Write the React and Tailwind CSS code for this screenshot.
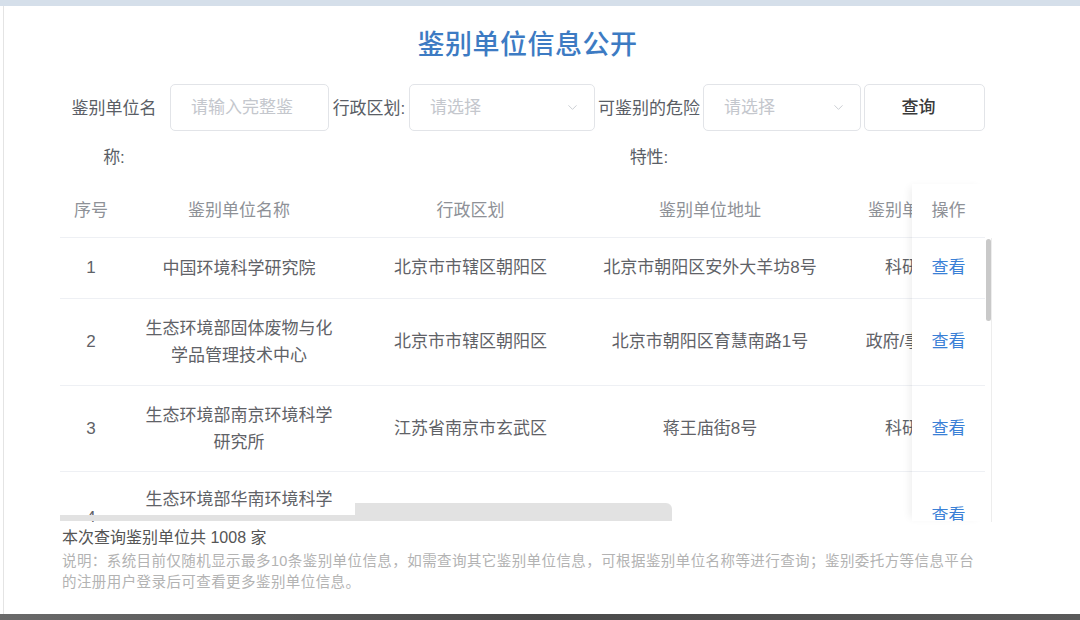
import { ChevronDown } from "lucide-react";

const rows = [
  { no: "1", name: ["中国环境科学研究院"], area: "北京市市辖区朝阳区", addr: "北京市朝阳区安外大羊坊8号", type: "科研院所" },
  { no: "2", name: ["生态环境部固体废物与化", "学品管理技术中心"], area: "北京市市辖区朝阳区", addr: "北京市朝阳区育慧南路1号", type: "政府/事业单位" },
  { no: "3", name: ["生态环境部南京环境科学", "研究所"], area: "江苏省南京市玄武区", addr: "蒋王庙街8号", type: "科研院所" },
];

const rowHeights = ["h-[61px]", "h-[87px]", "h-[86px]"];

function Label({ lines, w }) {
  return (
    <div className={`${w} shrink-0 text-center leading-[49px] text-[17px] text-[#5a5e66]`}>
      {lines.map((l) => (
        <div key={l}>{l}</div>
      ))}
    </div>
  );
}

function Select({ w, pad }) {
  return (
    <div className={`${w} h-[47px] shrink-0 flex items-center justify-between rounded-[5px] border border-[#e2e4e8] pl-[20px] ${pad} text-[17px] text-[#c4c7cd]`}>
      <span>请选择</span>
      <ChevronDown size={15} strokeWidth={1.4} className="text-[#c4c7cd]" />
    </div>
  );
}

export default function App() {
  return (
    <div className="w-[1080px] h-[620px] overflow-hidden bg-white flex flex-col font-['Liberation_Sans','Noto_Sans_CJK_SC',sans-serif]">
      <div className="h-[6px] bg-[#d5dfea] shrink-0" />
      <div className="flex-1 ml-[3px] border-l border-[#e4e4e4] flex flex-col">
        <h1 className="mt-[21px] w-[1047px] text-center text-[27px] leading-[36px] font-medium text-[#3d7bc3] tracking-[0.5px]">
          鉴别单位信息公开
        </h1>

        <div className="mt-[21px] flex items-start pl-[58px]">
          <Label lines={["鉴别单位名", "称:"]} w="w-[104px]" />
          <div className="ml-[4px] w-[159px] h-[47px] shrink-0 flex items-center rounded-[5px] border border-[#e2e4e8] pl-[20px] text-[17px] text-[#c4c7cd]">
            请输入完整鉴
          </div>
          <Label lines={["行政区划:"]} w="w-[80px]" />
          <Select w="w-[186px]" pad="pr-[14px]" />
          <Label lines={["可鉴别的危险", "特性:"]} w="w-[108px]" />
          <Select w="w-[158px]" pad="pr-[14px]" />
          <button className="ml-[3px] w-[121px] h-[47px] shrink-0 rounded-[5px] border border-[#e2e4e8] pr-[12px] text-[17px] font-medium text-[#3a3a3a]">
            查询
          </button>
        </div>

        <div className="relative mt-[2px] ml-[56px] w-[932px]">
          <div className="w-[925px] h-[54px] overflow-hidden border-b border-[#eef0f4] flex items-center text-[17px] text-[#8e9197] whitespace-nowrap">
            <div className="w-[62px] shrink-0 text-center">序号</div>
            <div className="w-[234px] shrink-0 text-center">鉴别单位名称</div>
            <div className="w-[229px] shrink-0 text-center">行政区划</div>
            <div className="w-[250px] shrink-0 text-center">鉴别单位地址</div>
            <div className="w-[168px] shrink-0 text-center">鉴别单位类型</div>
          </div>

          <div className="relative w-[925px] h-[284px] overflow-hidden text-[17px] text-[#5f6267]">
            {rows.map((r, i) => (
              <div key={r.no} className={`${rowHeights[i]} flex items-center border-b border-[#eef0f4] whitespace-nowrap`}>
                <div className="w-[62px] shrink-0 text-center">{r.no}</div>
                <div className="w-[234px] shrink-0 text-center leading-[27px]">
                  {r.name.map((l) => (
                    <div key={l}>{l}</div>
                  ))}
                </div>
                <div className="w-[229px] shrink-0 text-center">{r.area}</div>
                <div className="w-[250px] shrink-0 text-center">{r.addr}</div>
                <div className="w-[168px] shrink-0 text-center">{r.type}</div>
              </div>
            ))}
            <div className="h-[86px] flex items-start whitespace-nowrap leading-[27px]">
              <div className="w-[62px] shrink-0 pt-[32px] text-center">4</div>
              <div className="w-[234px] shrink-0 pt-[14px] text-center">生态环境部华南环境科学</div>
            </div>
            <div className="absolute left-0 bottom-[1px] w-[295px] h-[6px] bg-[#e2e2e2]" />
            <div className="absolute left-[295px] bottom-[1px] w-[317px] h-[18px] bg-[#e2e2e2] rounded-tr-[6px]" />
          </div>

          <div className="absolute top-0 right-[7px] w-[73px] h-[337px] bg-white overflow-hidden shadow-[-5px_0_8px_-3px_rgba(0,0,0,0.07)] text-[17px]">
            <div className="h-[54px] flex items-center justify-center border-b border-[#eef0f4] text-[#8e9197]">操作</div>
            {rows.map((r, i) => (
              <div key={r.no} className={`${rowHeights[i]} flex items-center justify-center border-b border-[#eef0f4] text-[#3a80d6]`}>
                查看
              </div>
            ))}
            <div className="h-[86px] pt-[30px] leading-[27px] text-center text-[#3a80d6]">查看</div>
          </div>

          <div className="absolute top-[54px] right-0 w-[7px] h-[284px] border-r border-[#ededed]">
            <div className="mt-[1px] ml-[1px] w-[5px] h-[82px] rounded-full bg-[#c9c9c9]" />
          </div>
        </div>

        <div className="mt-[4px] ml-[58px] text-[16px] leading-[24px] text-[#555]">本次查询鉴别单位共 1008 家</div>
        <div className="mt-[1px] ml-[58px] w-[925px] text-[14.5px] leading-[21px] text-[#b3b3b3] tracking-[0.42px]">
          说明：系统目前仅随机显示最多10条鉴别单位信息，如需查询其它鉴别单位信息，可根据鉴别单位名称等进行查询；鉴别委托方等信息平台的注册用户登录后可查看更多鉴别单位信息。
        </div>
      </div>
      <div className="h-[6px] shrink-0 bg-gradient-to-r from-[#6a6a6a] via-[#4a4a4a] to-[#5a5a5a]" />
    </div>
  );
}
